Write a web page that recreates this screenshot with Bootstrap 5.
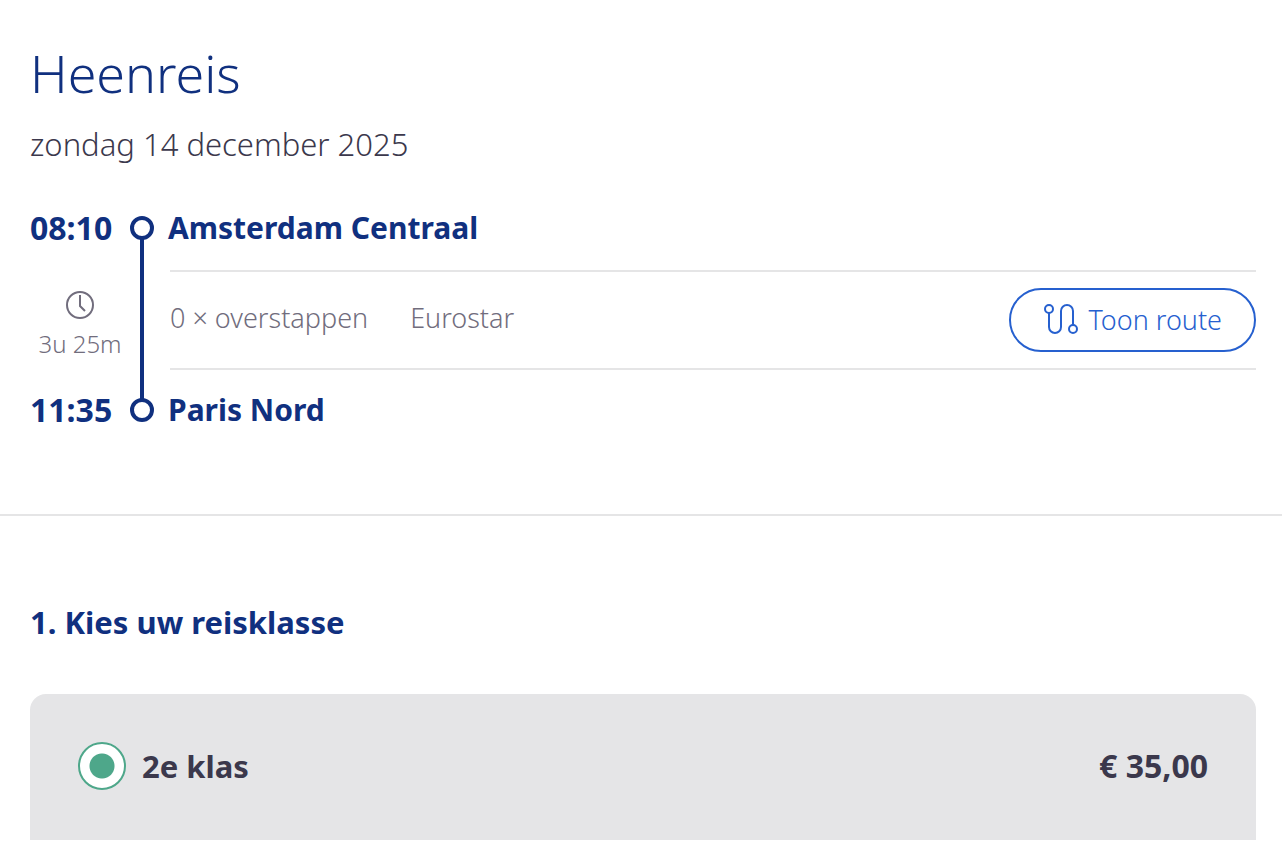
<!DOCTYPE html>
<html lang="nl">
<head>
<meta charset="utf-8">
<meta name="viewport" content="width=device-width, initial-scale=1">
<title>Heenreis</title>
<link href="https://cdn.jsdelivr.net/npm/bootstrap@5.3.0/dist/css/bootstrap.min.css" rel="stylesheet">
<style>
  :root { --navy: #10307f; --ink: #3b384c; --muted: #716d7d; --line: #e5e5e6; --blue: #2660cf; --green: #4ea78a; }
  body { font-family: "Noto Sans", "Open Sans", sans-serif; font-weight: 300; color: var(--ink); }
  .section-pad { padding-left: 30px; padding-right: 26px; }
  .trip { padding-top: 40px; padding-bottom: 80px; border-bottom: 2px solid var(--line); }
  .trip-title { font-size: 52px; line-height: 66px; font-weight: 300; color: var(--navy); }
  .trip-date { font-size: 31px; line-height: 40px; margin: 18px 0 40px; }
  .journey { display: grid; grid-template-columns: 100px 24px 1fr; grid-template-rows: 50px auto 48px; row-gap: 16px; }
  .strong-text { font-size: 31px; line-height: 48px; font-weight: 700; }
  .clock-time { font-size: 32px; line-height: 48px; font-weight: 700; }
  .navy { color: var(--navy); }
  .rail { grid-column: 2; grid-row: 1 / 4; padding: 12px 0; }
  .stop { width: 24px; height: 24px; border: 4px solid var(--navy); border-radius: 50%; }
  .track { width: 4px; background: var(--navy); margin: -1px 0; }
  .station { grid-column: 3; padding-left: 14px; font-size: 30px; line-height: 48px; font-weight: 700; }
  .duration { font-size: 24px; line-height: 32px; color: var(--muted); padding-top: 10px; }
  .details { grid-column: 3; margin-left: 16px; height: 100px; border: solid var(--line); border-width: 2px 0; font-size: 27px; line-height: 36px; color: var(--muted); }
  .detail-text { margin-right: 42px; padding-bottom: 4px; }
  .route-btn { --bs-btn-color: var(--blue); --bs-btn-border-color: var(--blue); --bs-btn-hover-color: #fff; --bs-btn-hover-bg: var(--blue);
    --bs-btn-font-size: 27px; --bs-btn-font-weight: 300; --bs-btn-border-width: 2px; --bs-btn-padding-x: 32px; --bs-btn-padding-y: 12px; line-height: 36px; gap: 9px; }
  .travel-class { padding-top: 82px; }
  .class-option { margin-top: 48px; height: 146px; padding: 48px; background: #e5e5e7; border-radius: 16px 16px 0 0; }
  .class-radio.form-check-input { width: 48px; height: 48px; margin: 0 16px 0 0; border: 2px solid var(--green); background: radial-gradient(circle, var(--green) 12px, #fff 13px); }
  .price { font-size: 32px; }
</style>
</head>
<body>
<main>
  <section class="trip section-pad">
    <h1 class="trip-title mb-0">Heenreis</h1>
    <p class="trip-date">zondag 14 december 2025</p>
    <div class="journey">
      <time class="clock-time navy">08:10</time>
      <div class="rail d-flex flex-column align-items-center">
        <span class="stop"></span><span class="track flex-grow-1"></span><span class="stop"></span>
      </div>
      <h2 class="station navy mb-0">Amsterdam Centraal</h2>
      <div class="duration d-flex flex-column align-items-center justify-content-center gap-2">
        <svg width="30" height="30" viewBox="0 0 30 30" fill="none" stroke="currentColor" stroke-width="2" aria-hidden="true"><circle cx="15" cy="15" r="13"/><path d="M15 5v11l5 5"/></svg>
        <span class="text-nowrap">3u 25m</span>
      </div>
      <div class="details d-flex align-items-center">
        <span class="detail-text">0 × overstappen</span>
        <span class="detail-text">Eurostar</span>
        <button type="button" class="btn route-btn rounded-pill d-flex align-items-center ms-auto">
          <svg width="36" height="32" viewBox="0 0 36 32" fill="none" stroke="currentColor" stroke-width="2" aria-hidden="true"><circle cx="6" cy="5" r="4"/><circle cx="30" cy="25" r="4"/><path d="M6 9v14a6 6 0 0 0 12 0V7a6 6 0 0 1 12 0v14"/></svg>
          Toon route
        </button>
      </div>
      <time class="clock-time navy">11:35</time>
      <h2 class="station navy mb-0">Paris Nord</h2>
    </div>
  </section>
  <section class="travel-class section-pad">
    <h2 class="strong-text navy mb-0">1. Kies uw reisklasse</h2>
    <div class="class-option strong-text d-flex align-items-start">
      <input class="form-check-input class-radio" type="radio" name="reisklasse" id="klas2" checked>
      <label for="klas2">2e klas</label>
      <span class="price ms-auto">€ 35,00</span>
    </div>
  </section>
</main>
<script src="https://cdn.jsdelivr.net/npm/bootstrap@5.3.0/dist/js/bootstrap.bundle.min.js"></script>
</body>
</html>
